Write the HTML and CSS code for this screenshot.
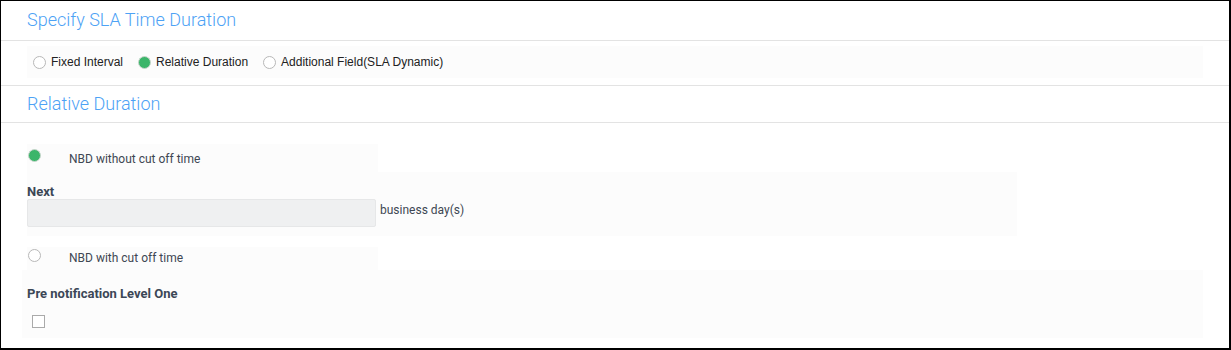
FILE: index.html
```html
<!DOCTYPE html>
<html lang="en">
<head>
    <meta charset="UTF-8">
    <meta name="viewport" content="width=device-width, initial-scale=1.0">
    <title>SLA Time Duration</title>
    <link rel="stylesheet" href="styles.css">
</head>
<body>

    <div class="frame">
        <div class="section-head">
            <h2>Specify SLA Time Duration</h2>
        </div>

        <div class="mode-row">
            <label class="opt"><span class="radio"></span>Fixed Interval</label>
            <label class="opt"><span class="radio checked"></span>Relative Duration</label>
            <label class="opt"><span class="radio"></span>Additional Field(SLA Dynamic)</label>
        </div>

        <div class="section-head second">
            <h2>Relative Duration</h2>
        </div>

        <div class="content">
            <div class="choice">
                <span class="radio checked"></span>
                <span class="choice-text">NBD without cut off time</span>
            </div>

            <div class="next-box">
                <div class="field-label">Next</div>
                <div class="next-line">
                    <input type="text" class="days-input">
                    <span class="unit">business day(s)</span>
                </div>
            </div>

            <div class="choice short">
                <span class="radio"></span>
                <span class="choice-text">NBD with cut off time</span>
            </div>

            <div class="notify-box">
                <div class="field-label">Pre notification Level One</div>
                <span class="check"></span>
            </div>
        </div>
    </div>

</body>
</html>
```

FILE: styles.css
```css
body {
    margin: 0;
    font-family: Roboto, Arial, sans-serif;
    background: white;
}
.frame {
    width: 1231px;
    height: 350px;
    box-sizing: border-box;
    border: 1px solid #000;
    border-right-width: 2px;
    border-bottom-width: 2px;
    overflow: hidden;
}
.section-head {
    height: 39px;
    border-bottom: 1px solid #e3e3e3;
    padding-left: 26px;
}
.section-head h2 {
    margin: 0;
    padding-top: 9px;
    font-size: 18px;
    font-weight: 300;
    color: #4da2f5;
    line-height: 20px;
}
.section-head.second {
    height: 36px;
    border-top: 1px solid #e3e3e3;
}
.section-head.second h2 {
    padding-top: 8px;
}
.mode-row {
    margin: 5px 26px 7px 26px;
    width: 1176px;
    height: 32px;
    background: #fcfcfc;
    display: flex;
    align-items: center;
    padding-left: 6px;
    box-sizing: border-box;
    font-family: "Liberation Sans", Arial, sans-serif;
    font-size: 12px;
    color: #222;
}
.opt {
    display: flex;
    align-items: center;
    margin-right: 15px;
}
.opt .radio {
    margin-right: 5px;
}
.radio {
    width: 13px;
    height: 13px;
    border: 1px solid #b8b8b8;
    border-radius: 50%;
    box-sizing: border-box;
    background: white;
    display: inline-block;
    flex: none;
}
.radio.checked {
    background: #3bb56a;
    border-color: #c9d6cd;
}
.content {
    padding-left: 26px;
    padding-top: 21px;
}
.choice {
    width: 351px;
    height: 28px;
    background: #fcfcfc;
    display: flex;
    align-items: center;
}
.choice .radio {
    margin-left: 1px;
    margin-top: -6px;
}
.choice-text {
    margin-left: 28px;
    margin-top: 1px;
    font-size: 12px;
    color: #3e4753;
}
.choice.short {
    height: 23px;
}
.choice.short .choice-text {
    margin-top: -2px;
}
.next-box {
    width: 990px;
    height: 64px;
    background: #fcfcfc;
    padding-top: 13px;
    box-sizing: border-box;
    margin-bottom: 11px;
}
.field-label {
    font-size: 13px;
    font-weight: 700;
    color: #3b4756;
    line-height: 14px;
}
.next-line {
    display: flex;
    align-items: center;
}
.days-input {
    width: 349px;
    height: 28px;
    box-sizing: border-box;
    border: 1px solid #e6e7e8;
    border-radius: 2px;
    background: #eff0f1;
    margin: 0;
    outline: none;
}
.unit {
    margin-left: 4px;
    font-size: 12px;
    color: #3e4753;
    margin-top: -7px;
}
.notify-box {
    width: 1181px;
    height: 68px;
    margin-left: -5px;
    padding: 17px 0 0 5px;
    box-sizing: border-box;
    background: #fcfcfc;
}
.check {
    display: block;
    width: 13px;
    height: 13px;
    box-sizing: border-box;
    border: 1px solid #aaa;
    margin: 14px 0 0 5px;
    background: white;
}
```
